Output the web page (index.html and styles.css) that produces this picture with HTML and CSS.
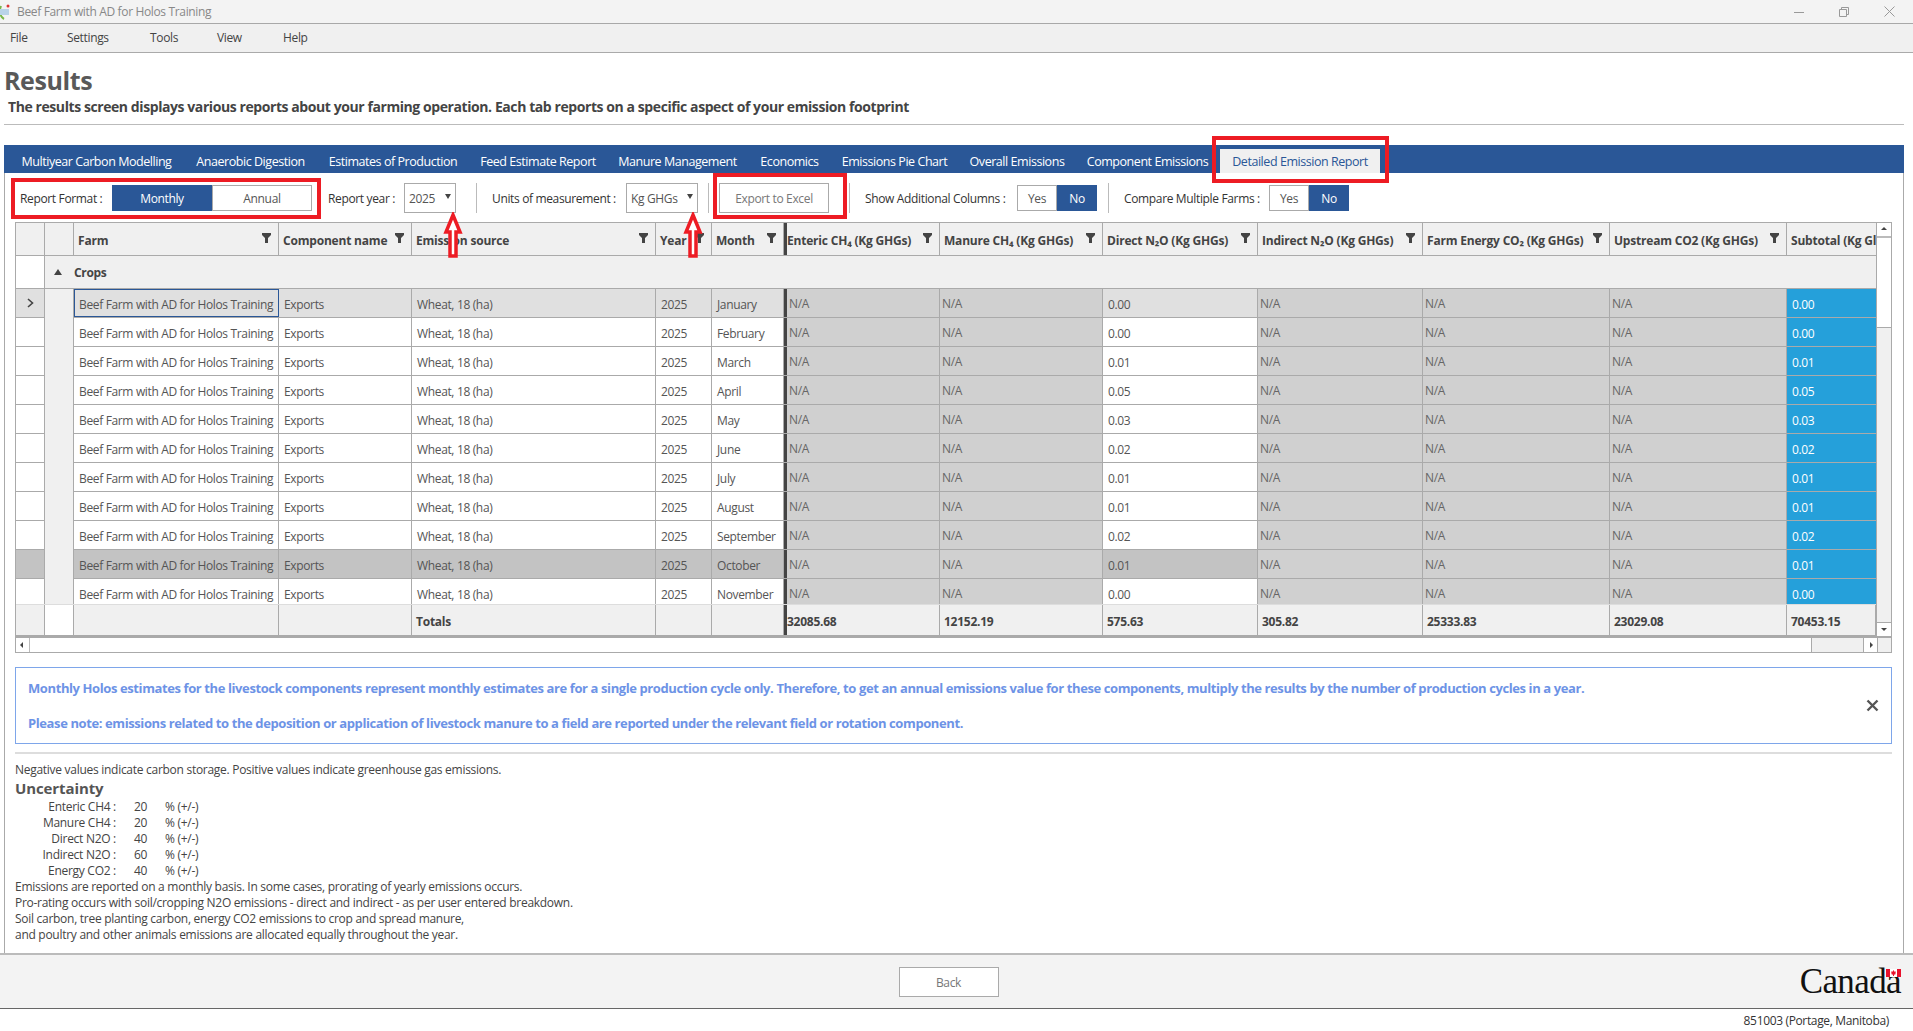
FILE: index.html
```html
<!DOCTYPE html>
<html>
<head>
<meta charset="utf-8">
<title>Beef Farm with AD for Holos Training</title>
<link rel="stylesheet" href="styles.css">
</head>
<body>
<svg class="defs" width="0" height="0">
	<symbol id="funnel" viewBox="0 0 9 10"><path d="M0 0H9V2L6 5V10H3V5L0 2Z" fill="#444"/></symbol>
</svg>

<div class="titlebar">
	<svg class="appicon" width="12" height="18" viewBox="0 0 12 18"><path d="M1 3C-1 8 0 14 4 16" fill="none" stroke="#7ab648" stroke-width="2"/><rect x="0" y="6" width="9" height="6" fill="#b9d3e8"/><circle cx="8" cy="3" r="1.5" fill="#d33"/></svg>
	<span class="apptitle">Beef Farm with AD for Holos Training</span>
	<div class="winbtns">
		<svg width="10" height="10" viewBox="0 0 10 10"><path d="M0 5.5H10" stroke="#999"/></svg>
		<svg width="10" height="10" viewBox="0 0 10 10"><path d="M.5 2.5H7.5V9.5H.5ZM2.5 2.5V.5H9.5V7.5H7.5" fill="none" stroke="#999"/></svg>
		<svg width="11" height="11" viewBox="0 0 11 11"><path d="M.5 .5L10.5 10.5M10.5 .5L.5 10.5" stroke="#999"/></svg>
	</div>
</div>
<div class="menubar">
	<span class="m1">File</span><span class="m2">Settings</span><span class="m3">Tools</span><span class="m4">View</span><span>Help</span>
</div>

<div class="page">
	<h1>Results</h1>
	<p class="lead">The results screen displays various reports about your farming operation. Each tab reports on a specific aspect of your emission footprint</p>
	<hr class="rule">

	<div class="content">
		<div class="tabs">
			<a class="t1">Multiyear Carbon Modelling</a>
			<a class="t2">Anaerobic Digestion</a>
			<a class="t3">Estimates of Production</a>
			<a class="t4">Feed Estimate Report</a>
			<a class="t5">Manure Management</a>
			<a class="t6">Economics</a>
			<a class="t7">Emissions Pie Chart</a>
			<a class="t8">Overall Emissions</a>
			<a class="t9">Component Emissions</a>
			<a class="on">Detailed Emission Report</a>
		</div>

		<div class="toolbar">
			<label class="l1">Report Format :</label>
			<div class="toggle wide"><span class="sel">Monthly</span><span>Annual</span></div>
			<label class="l2">Report year :</label>
			<div class="combo c1">2025<i></i></div>
			<b class="sep s1"></b>
			<label class="l3">Units of measurement :</label>
			<div class="combo c2">Kg GHGs<i></i></div>
			<b class="sep s2"></b>
			<button class="export">Export to Excel</button>
			<b class="sep s3"></b>
			<label class="l4">Show Additional Columns :</label>
			<div class="toggle"><span>Yes</span><span class="sel">No</span></div>
			<b class="sep s4"></b>
			<label class="l5">Compare Multiple Farms :</label>
			<div class="toggle"><span>Yes</span><span class="sel">No</span></div>
		</div>

		<div class="grid">
			<div class="gridmain">
				<div class="gridview">
					<div class="row head">
						<div></div><div></div>
						<div>Farm<svg><use href="#funnel"/></svg></div>
						<div>Component name<svg><use href="#funnel"/></svg></div>
						<div>Emission source<svg><use href="#funnel"/></svg></div>
						<div>Year<svg><use href="#funnel"/></svg></div>
						<div>Month<svg><use href="#funnel"/></svg></div>
						<div class="bar">Enteric CH₄ (Kg GHGs)<svg><use href="#funnel"/></svg></div>
						<div>Manure CH₄ (Kg GHGs)<svg><use href="#funnel"/></svg></div>
						<div>Direct N₂O (Kg GHGs)<svg><use href="#funnel"/></svg></div>
						<div>Indirect N₂O (Kg GHGs)<svg><use href="#funnel"/></svg></div>
						<div>Farm Energy CO₂ (Kg GHGs)<svg><use href="#funnel"/></svg></div>
						<div>Upstream CO2 (Kg GHGs)<svg><use href="#funnel"/></svg></div>
						<div class="clip">Subtotal (Kg Gl</div>
					</div>
					<div class="group">
						<div class="ghead"></div>
						<div class="gtitle"><i></i>Crops</div>
					</div>
					<div class="rows">
						<div class="row cur">
							<div class="rh"><svg width="7" height="10" viewBox="0 0 7 10"><path d="M1 1L5.500 5L1 9" fill="none" stroke="#444" stroke-width="1.600"/></svg></div><div class="ind"></div>
							<div class="focus">Beef Farm with AD for Holos Training</div><div>Exports</div><div>Wheat, 18 (ha)</div><div>2025</div><div>January</div>
							<div class="na bar">N/A</div><div class="na">N/A</div><div>0.00</div><div class="na">N/A</div><div class="na">N/A</div><div class="na">N/A</div><div class="sub">0.00</div>
						</div>
						<div class="row">
							<div class="rh"></div><div class="ind"></div>
							<div>Beef Farm with AD for Holos Training</div><div>Exports</div><div>Wheat, 18 (ha)</div><div>2025</div><div>February</div>
							<div class="na bar">N/A</div><div class="na">N/A</div><div>0.00</div><div class="na">N/A</div><div class="na">N/A</div><div class="na">N/A</div><div class="sub">0.00</div>
						</div>
						<div class="row">
							<div class="rh"></div><div class="ind"></div>
							<div>Beef Farm with AD for Holos Training</div><div>Exports</div><div>Wheat, 18 (ha)</div><div>2025</div><div>March</div>
							<div class="na bar">N/A</div><div class="na">N/A</div><div>0.01</div><div class="na">N/A</div><div class="na">N/A</div><div class="na">N/A</div><div class="sub">0.01</div>
						</div>
						<div class="row">
							<div class="rh"></div><div class="ind"></div>
							<div>Beef Farm with AD for Holos Training</div><div>Exports</div><div>Wheat, 18 (ha)</div><div>2025</div><div>April</div>
							<div class="na bar">N/A</div><div class="na">N/A</div><div>0.05</div><div class="na">N/A</div><div class="na">N/A</div><div class="na">N/A</div><div class="sub">0.05</div>
						</div>
						<div class="row">
							<div class="rh"></div><div class="ind"></div>
							<div>Beef Farm with AD for Holos Training</div><div>Exports</div><div>Wheat, 18 (ha)</div><div>2025</div><div>May</div>
							<div class="na bar">N/A</div><div class="na">N/A</div><div>0.03</div><div class="na">N/A</div><div class="na">N/A</div><div class="na">N/A</div><div class="sub">0.03</div>
						</div>
						<div class="row">
							<div class="rh"></div><div class="ind"></div>
							<div>Beef Farm with AD for Holos Training</div><div>Exports</div><div>Wheat, 18 (ha)</div><div>2025</div><div>June</div>
							<div class="na bar">N/A</div><div class="na">N/A</div><div>0.02</div><div class="na">N/A</div><div class="na">N/A</div><div class="na">N/A</div><div class="sub">0.02</div>
						</div>
						<div class="row">
							<div class="rh"></div><div class="ind"></div>
							<div>Beef Farm with AD for Holos Training</div><div>Exports</div><div>Wheat, 18 (ha)</div><div>2025</div><div>July</div>
							<div class="na bar">N/A</div><div class="na">N/A</div><div>0.01</div><div class="na">N/A</div><div class="na">N/A</div><div class="na">N/A</div><div class="sub">0.01</div>
						</div>
						<div class="row">
							<div class="rh"></div><div class="ind"></div>
							<div>Beef Farm with AD for Holos Training</div><div>Exports</div><div>Wheat, 18 (ha)</div><div>2025</div><div>August</div>
							<div class="na bar">N/A</div><div class="na">N/A</div><div>0.01</div><div class="na">N/A</div><div class="na">N/A</div><div class="na">N/A</div><div class="sub">0.01</div>
						</div>
						<div class="row">
							<div class="rh"></div><div class="ind"></div>
							<div>Beef Farm with AD for Holos Training</div><div>Exports</div><div>Wheat, 18 (ha)</div><div>2025</div><div>September</div>
							<div class="na bar">N/A</div><div class="na">N/A</div><div>0.02</div><div class="na">N/A</div><div class="na">N/A</div><div class="na">N/A</div><div class="sub">0.02</div>
						</div>
						<div class="row hover">
							<div class="rh"></div><div class="ind"></div>
							<div>Beef Farm with AD for Holos Training</div><div>Exports</div><div>Wheat, 18 (ha)</div><div>2025</div><div>October</div>
							<div class="na bar">N/A</div><div class="na">N/A</div><div>0.01</div><div class="na">N/A</div><div class="na">N/A</div><div class="na">N/A</div><div class="sub">0.01</div>
						</div>
						<div class="row">
							<div class="rh"></div><div class="ind"></div>
							<div>Beef Farm with AD for Holos Training</div><div>Exports</div><div>Wheat, 18 (ha)</div><div>2025</div><div>November</div>
							<div class="na bar">N/A</div><div class="na">N/A</div><div>0.00</div><div class="na">N/A</div><div class="na">N/A</div><div class="na">N/A</div><div class="sub">0.00</div>
						</div>
					</div>
					<div class="row totals">
						<div></div><div class="ind"></div><div></div><div></div>
						<div>Totals</div><div></div><div></div>
						<div class="bar">32085.68</div><div>12152.19</div><div>575.63</div><div>305.82</div><div>25333.83</div><div>23029.08</div><div>70453.15</div>
					</div>
				</div>
				<div class="vscroll">
					<span class="sbtn up"></span>
					<span class="vthumb"></span>
					<span class="sbtn down"></span>
				</div>
			</div>
			<div class="hscroll">
				<span class="sbtn left"></span>
				<span class="hthumb"></span>
				<span class="sbtn right"></span>
				<span class="corner"></span>
			</div>
		</div>

		<div class="notice">
			<p>Monthly Holos estimates for the livestock components represent monthly estimates are for a single production cycle only. Therefore, to get an annual emissions value for these components, multiply the results by the number of production cycles in a year.</p>
			<p>Please note: emissions related to the deposition or application of livestock manure to a field are reported under the relevant field or rotation component.</p>
			<svg class="close" width="13" height="13" viewBox="0 0 13 13"><path d="M1.500 1.500L11.500 11.500M11.500 1.500L1.500 11.500" stroke="#555" stroke-width="2.400"/></svg>
		</div>
		<hr class="rule2">

		<div class="notes">
			<div>Negative values indicate carbon storage. Positive values indicate greenhouse gas emissions.</div>
			<h2>Uncertainty</h2>
			<div class="unc">
				<span>Enteric CH4 :</span><span>20</span><span>% (+/-)</span>
				<span>Manure CH4 :</span><span>20</span><span>% (+/-)</span>
				<span>Direct N2O :</span><span>40</span><span>% (+/-)</span>
				<span>Indirect N2O :</span><span>60</span><span>% (+/-)</span>
				<span>Energy CO2 :</span><span>40</span><span>% (+/-)</span>
			</div>
			<div>Emissions are reported on a monthly basis. In some cases, prorating of yearly emissions occurs.</div>
			<div>Pro-rating occurs with soil/cropping N2O emissions - direct and indirect - as per user entered breakdown.</div>
			<div>Soil carbon, tree planting carbon, energy CO2 emissions to crop and spread manure,</div>
			<div>and poultry and other animals emissions are allocated equally throughout the year.</div>
		</div>
	</div>
</div>

<div class="footer">
	<button class="back">Back</button>
	<div class="canada">Canada<svg width="15" height="8" viewBox="0 0 15 9" preserveAspectRatio="none"><rect width="15" height="9" fill="#e8112d"/><rect x="4" width="7" height="9" fill="#fff"/><path d="M7.500 1L8.500 3L10 2.800L9.300 5L10 5.500L8 6.500V8H7V6.500L5 5.500L5.700 5L5 2.800L6.500 3Z" fill="#e8112d"/></svg></div>
</div>
<div class="status">851003 (Portage, Manitoba)</div>

<!-- red markup drawn on the screenshot -->
<div class="mark mark1"></div>
<div class="mark mark2"></div>
<div class="mark mark3"></div>
<svg class="arrow arrow1" width="20" height="46" viewBox="0 0 20 46"><path d="M10 3L17 20H13V44H7V20H3Z" fill="#fff" stroke="#ed1c24" stroke-width="3.500"/></svg>
<svg class="arrow arrow2" width="20" height="46" viewBox="0 0 20 46"><path d="M10 3L17 20H13V44H7V20H3Z" fill="#fff" stroke="#ed1c24" stroke-width="3.500"/></svg>
</body>
</html>
```

FILE: styles.css
```css
body {
	margin: 0;
	width: 1913px;
	height: 1031px;
	overflow: hidden;
	position: relative;
	background: #fff;
	color: #444;
	font: 12px/16px "Open Sans", sans-serif;
	letter-spacing: -.35px;
	display: flex;
	flex-direction: column;
}
.defs {
	position: absolute;
}
.titlebar {
	height: 23px;
	background: #f3f3f3;
	border-bottom: 1px solid #a8a8a8;
	display: flex;
	align-items: center;
	color: #888;
}
.appicon {
	margin-right: 5px;
}
.apptitle {
	flex: 1;
}
.winbtns {
	display: flex;
	align-items: center;
	gap: 35px;
	padding-right: 18px;
}
.menubar {
	height: 28px;
	line-height: 30px;
	background: #f0f0f0;
	border-bottom: 1px solid #aaa;
	display: flex;
	align-items: center;
	padding-left: 10px;
}
.menubar span {
	width: 40px;
}
.menubar .m1 { width: 57px; }
.menubar .m2 { width: 83px; }
.menubar .m3 { width: 67px; }
.menubar .m4 { width: 66px; }
.page {
	flex: 1;
	min-height: 0;
	padding: 0 9px 0 4px;
	display: flex;
	flex-direction: column;
}
h1 {
	margin: 10px 0 0;
	font-size: 25px;
	line-height: 34px;
	font-weight: 700;
	letter-spacing: -.4px;
	color: #595959;
}
.lead {
	margin: 0 0 0 4px;
	font-size: 14px;
	line-height: 19px;
	font-weight: 700;
	letter-spacing: -.42px;
	color: #444;
}
.rule {
	margin: 8px 0 0;
	border: 0;
	border-top: 1px solid #bbb;
}
.content {
	flex: 1;
	min-height: 0;
	margin-top: 20px;
	border: 1px solid #aaa;
	border-top: 0;
	border-bottom: 0;
	display: flex;
	flex-direction: column;
}

/* tabs */
.tabs {
	height: 28px;
	background: #2a5797;
	margin: 0 -1px;
	display: flex;
	align-items: flex-end;
	padding-left: 5px;
}
.tabs a {
	height: 24px;
	line-height: 26px;
	color: #fff;
	font-size: 12.500px;
	letter-spacing: -.45px;
	text-align: center;
}
.t1 { width: 175px; }
.t2 { width: 133px; }
.t3 { width: 152px; }
.t4 { width: 138px; }
.t5 { width: 141px; }
.t6 { width: 83px; }
.t7 { width: 127px; }
.t8 { width: 118px; }
.t9 { width: 131px; margin-left: 6px; }
.tabs a.on {
	width: 160px;
	margin-left: 7px;
	background: #f0f0f0;
	color: #2a5797;
}

/* toolbar */
.toolbar {
	height: 49px;
	display: flex;
	align-items: center;
	color: #333;
	padding-left: 15px;
}
.toolbar > * {
	flex: none;
}
.toolbar label {
	padding-top: 2px;
}
.toggle {
	display: flex;
	height: 26px;
	line-height: 26px;
	text-align: center;
}
.toggle span {
	width: 40px;
	box-sizing: border-box;
	border: 1px solid #aaa;
	color: #555;
}
.toggle span.sel {
	background: #2a5797;
	border-color: #2a5797;
	color: #fff;
}
.toggle.wide span {
	width: 100px;
}
.l1 { width: 92px; }
.l2 { width: 76px; margin-left: 16px; }
.l3 { width: 134px; margin-left: 15px; }
.l4 { width: 152px; margin-left: 15px; }
.l5 { width: 145px; margin-left: 15px; }
.combo {
	height: 30px;
	box-sizing: border-box;
	border: 1px solid #aaa;
	line-height: 30px;
	padding-left: 4px;
	color: #555;
	position: relative;
}
.combo i {
	position: absolute;
	right: 4px;
	top: 10px;
	border: 3.500px solid transparent;
	border-top: 5px solid #444;
	border-bottom: 0;
}
.c1 { width: 52px; }
.c2 { width: 72px; }
.sep {
	width: 1px;
	height: 30px;
	background: #bbb;
}
.s1 { margin-left: 20px; }
.s2 { margin-left: 10px; }
.s3 { margin-left: 20px; }
.s4 { margin-left: 11px; }
.export, .back {
	font: inherit;
	letter-spacing: inherit;
	background: #fff;
	border: 1px solid #aaa;
	color: #777;
	padding: 2px 0 0;
}
.export {
	width: 110px;
	height: 30px;
	margin-left: 10px;
}

/* data grid */
.grid {
	margin: 0 11px 0 10px;
	border-left: 1px solid #aaa;
}
.gridmain {
	display: flex;
}
.gridview {
	width: 1860px;
	overflow: hidden;
}
.row {
	display: grid;
	grid-template-columns: 29px 29px 205px 133px 244px 56px 72px 156px 163px 155px 165px 187px 177px 89px;
	height: 29px;
	box-sizing: border-box;
	border-bottom: 1px solid #aaa;
	background: #fff;
}
.row > div {
	border-right: 1px solid #aaa;
	padding: 0 0 0 5px;
	line-height: 31px;
	white-space: nowrap;
	overflow: hidden;
	position: relative;
	box-sizing: border-box;
	color: #555;
}
.row > div:nth-child(-n+2) {
	padding: 0;
}
.row > div.bar {
	border-left: 3px solid #444;
	padding-left: 0;
}
.head {
	height: 34px;
	border-top: 1px solid #aaa;
	background: #f0f0f0;
}
.head > div {
	font-weight: 700;
	line-height: 35px !important;
	letter-spacing: -.2px;
	padding-left: 4px !important;
	color: #444 !important;
}
.head > div.bar {
	padding-left: 0 !important;
}
.head svg {
	position: absolute;
	right: 7px;
	top: 10px;
	width: 9px;
	height: 10px;
}
.head .clip {
	border-right: 0;
}
.group {
	height: 33px;
	box-sizing: border-box;
	display: flex;
	border-bottom: 1px solid #aaa;
}
.ghead {
	width: 29px;
	border-right: 1px solid #aaa;
	box-sizing: border-box;
}
.gtitle {
	flex: 1;
	background: #f0f0f0;
	font-weight: 700;
	line-height: 34px;
	padding-left: 29px;
	position: relative;
}
.gtitle i {
	position: absolute;
	left: 9px;
	top: 13px;
	border: 4.500px solid transparent;
	border-bottom: 6px solid #444;
	border-top: 0;
}
.rows {
	height: 315px;
	overflow: hidden;
}
.rh {
	display: flex;
	align-items: center;
	justify-content: center;
}
.ind {
	background: #f0f0f0;
	margin-bottom: -1px;
}
.na {
	background: #d0d0d0;
	line-height: 29px !important;
	padding-left: 2px !important;
	color: #666 !important;
}
.sub {
	background: #25a0da;
	color: #fff !important;
	border-right: 0 !important;
}
.cur > div {
	background: #e0e0e0;
}
.cur > .na {
	background: #d0d0d0;
}
.cur > .sub {
	background: #25a0da;
}
.cur > .ind {
	background: #f0f0f0;
}
.cur > .focus {
	border: 1px solid #2a5797;
	line-height: 29px;
	padding-left: 4px;
}
.hover > div {
	background: #c3c3c3;
}
.hover > .na {
	background: #d0d0d0;
}
.hover > .sub {
	background: #25a0da;
}
.hover > .ind {
	background: #f0f0f0;
}
.totals {
	height: 33px;
	background: #f0f0f0;
	border-top: 1px solid #ddd;
	border-bottom: 2px solid #aaa;
}
.totals > div {
	font-weight: 700;
	line-height: 33px;
	letter-spacing: -.25px;
	padding-left: 4px;
	color: #444;
}
.totals > .ind {
	background: #fff;
	margin-bottom: 0;
}
.vscroll {
	width: 16px;
	box-sizing: border-box;
	border: 1px solid #aaa;
	border-bottom: 0;
	background: #f0f0f0;
	display: flex;
	flex-direction: column;
}
.sbtn {
	display: block;
	box-sizing: border-box;
	background: #fff;
	position: relative;
}
.sbtn::after {
	content: "";
	position: absolute;
	left: 50%;
	top: 50%;
	border: 3px solid transparent;
}
.up, .down {
	height: 15px;
}
.up {
	border-bottom: 2px solid #bbb;
}
.up::after {
	margin: -3px 0 0 -3px;
	border-top: 0;
	border-bottom-color: #444;
}
.down {
	margin-top: auto;
	border: 1px solid #aaa;
	border-width: 1px 0;
}
.down::after {
	margin: -2px 0 0 -3px;
	border-bottom: 0;
	border-top-color: #444;
}
.vthumb {
	height: 89px;
	background: #fff;
	border-bottom: 1px solid #aaa;
}
.hscroll {
	height: 16px;
	border-top: 1px solid #aaa;
	border-bottom: 1px solid #aaa;
	box-sizing: border-box;
	background: #f0f0f0;
	display: flex;
}
.left, .right {
	width: 14px;
}
.left {
	border-right: 1px solid #bbb;
}
.left::after {
	margin: -3px 0 0 -3px;
	border-left: 0;
	border-right-color: #444;
}
.right {
	border-left: 1px solid #aaa;
}
.right::after {
	margin: -3px 0 0 -1px;
	border-right: 0;
	border-left-color: #444;
}
.hthumb {
	width: 1781px;
	background: #fff;
	border-right: 1px solid #aaa;
	margin-right: 51px;
}
.corner {
	flex: 1;
	border-left: 1px solid #aaa;
	border-right: 1px solid #aaa;
}

/* blue message */
.notice {
	margin: 14px 11px 0 10px;
	height: 77px;
	box-sizing: border-box;
	border: 1px solid #7ea6ea;
	padding: 11px 12px 0;
	position: relative;
	color: #6d93e6;
	font-weight: 700;
	font-size: 13px;
	line-height: 18px;
	letter-spacing: -.4px;
}
.notice p {
	margin: 0 0 17px;
}
.close {
	position: absolute;
	right: 12px;
	top: 31px;
}
.rule2 {
	margin: 8px 11px 0 10px;
	border: 0;
	border-top: 2px solid #ddd;
}

/* bottom notes */
.notes {
	margin-left: 10px;
	padding-top: 8px;
	letter-spacing: -.28px;
	color: #444;
}
h2 {
	margin: 0;
	font-size: 15px;
	line-height: 21px;
	font-weight: 700;
	letter-spacing: -.1px;
	color: #555;
}
.unc {
	display: grid;
	grid-template-columns: 101px 49px 60px;
}
.unc span:nth-child(3n+1) {
	text-align: right;
}
.unc span:nth-child(3n+2) {
	padding-left: 18px;
}

/* footer */
.footer {
	flex: none;
	background: #f3f3f3;
	border-top: 2px solid #bbb;
	border-bottom: 1px solid #666;
	box-sizing: border-box;
	height: 56px;
	display: flex;
	align-items: center;
	justify-content: center;
	position: relative;
}
.back {
	width: 100px;
	height: 30px;
	margin-right: 16px;
}
.canada {
	position: absolute;
	right: 12px;
	top: 12px;
	font: 35px/30px "Liberation Serif", serif;
	color: #111;
	letter-spacing: -.6px;
}
.canada svg {
	position: absolute;
	right: 0;
	top: 2px;
}
.status {
	height: 22px;
	flex: none;
	line-height: 24px;
	text-align: right;
	padding-right: 24px;
	color: #333;
}

/* markup */
.mark {
	position: absolute;
	border: 4px solid #ed1c24;
	box-sizing: border-box;
}
.mark1 { left: 11px; top: 178px; width: 310px; height: 41px; }
.mark2 { left: 713px; top: 173px; width: 134px; height: 46px; }
.mark3 { left: 1212px; top: 136px; width: 177px; height: 47px; }
.arrow {
	position: absolute;
	top: 212px;
}
.arrow1 { left: 443px; }
.arrow2 { left: 683px; }
```
